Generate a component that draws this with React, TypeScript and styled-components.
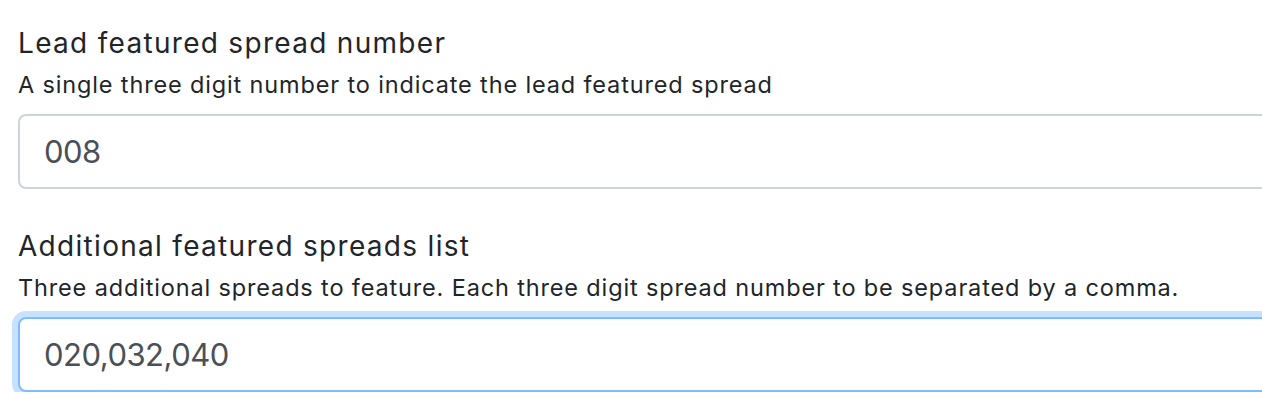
import React from 'react'
import styled, { createGlobalStyle } from 'styled-components'

const GlobalStyle = createGlobalStyle`
  html, body {
    margin: 0;
    padding: 0;
    background: #fff;
    overflow: hidden;
  }
  body {
    font-family: Inter, "Liberation Sans", Arial, sans-serif;
    color: #212529;
  }
`

const Form = styled.form`
  padding: 25px 0 0 18px;
  display: flex;
  flex-direction: column;
  gap: 39px;
`

const Group = styled.div`
  display: flex;
  flex-direction: column;
`

const Label = styled.label`
  font-size: 28px;
  line-height: 36px;
  font-weight: 400;
  letter-spacing: 1.3px;
  margin-bottom: 8px;
`

const Hint = styled.small`
  font-size: 23.5px;
  line-height: 32px;
  letter-spacing: 0.85px;
  margin-bottom: 13px;
`

const Input = styled.input<{ $focused?: boolean }>`
  box-sizing: border-box;
  width: 1300px;
  height: 75px;
  padding: 0 24px;
  font-family: Inter, "Liberation Sans", Arial, sans-serif;
  font-size: 31px;
  letter-spacing: -0.5px;
  color: #495057;
  background: #fff;
  border: 2px solid ${p => (p.$focused ? '#80bdff' : '#ced4da')};
  border-radius: 8px;
  outline: none;
  box-shadow: ${p => (p.$focused ? '0 0 0 6px rgba(0, 123, 255, 0.22)' : 'none')};
`

type FieldProps = {
  label: string
  hint: string
  value: string
  focused?: boolean
}

const Field = ({ label, hint, value, focused }: FieldProps) => (
  <Group>
    <Label>{label}</Label>
    <Hint>{hint}</Hint>
    <Input $focused={focused} defaultValue={value} />
  </Group>
)

export default function App() {
  return (
    <>
      <GlobalStyle />
      <Form onSubmit={e => e.preventDefault()}>
        <Field
          label="Lead featured spread number"
          hint="A single three digit number to indicate the lead featured spread"
          value="008"
        />
        <Field
          label="Additional featured spreads list"
          hint="Three additional spreads to feature. Each three digit spread number to be separated by a comma."
          value="020,032,040"
          focused
        />
      </Form>
    </>
  )
}
